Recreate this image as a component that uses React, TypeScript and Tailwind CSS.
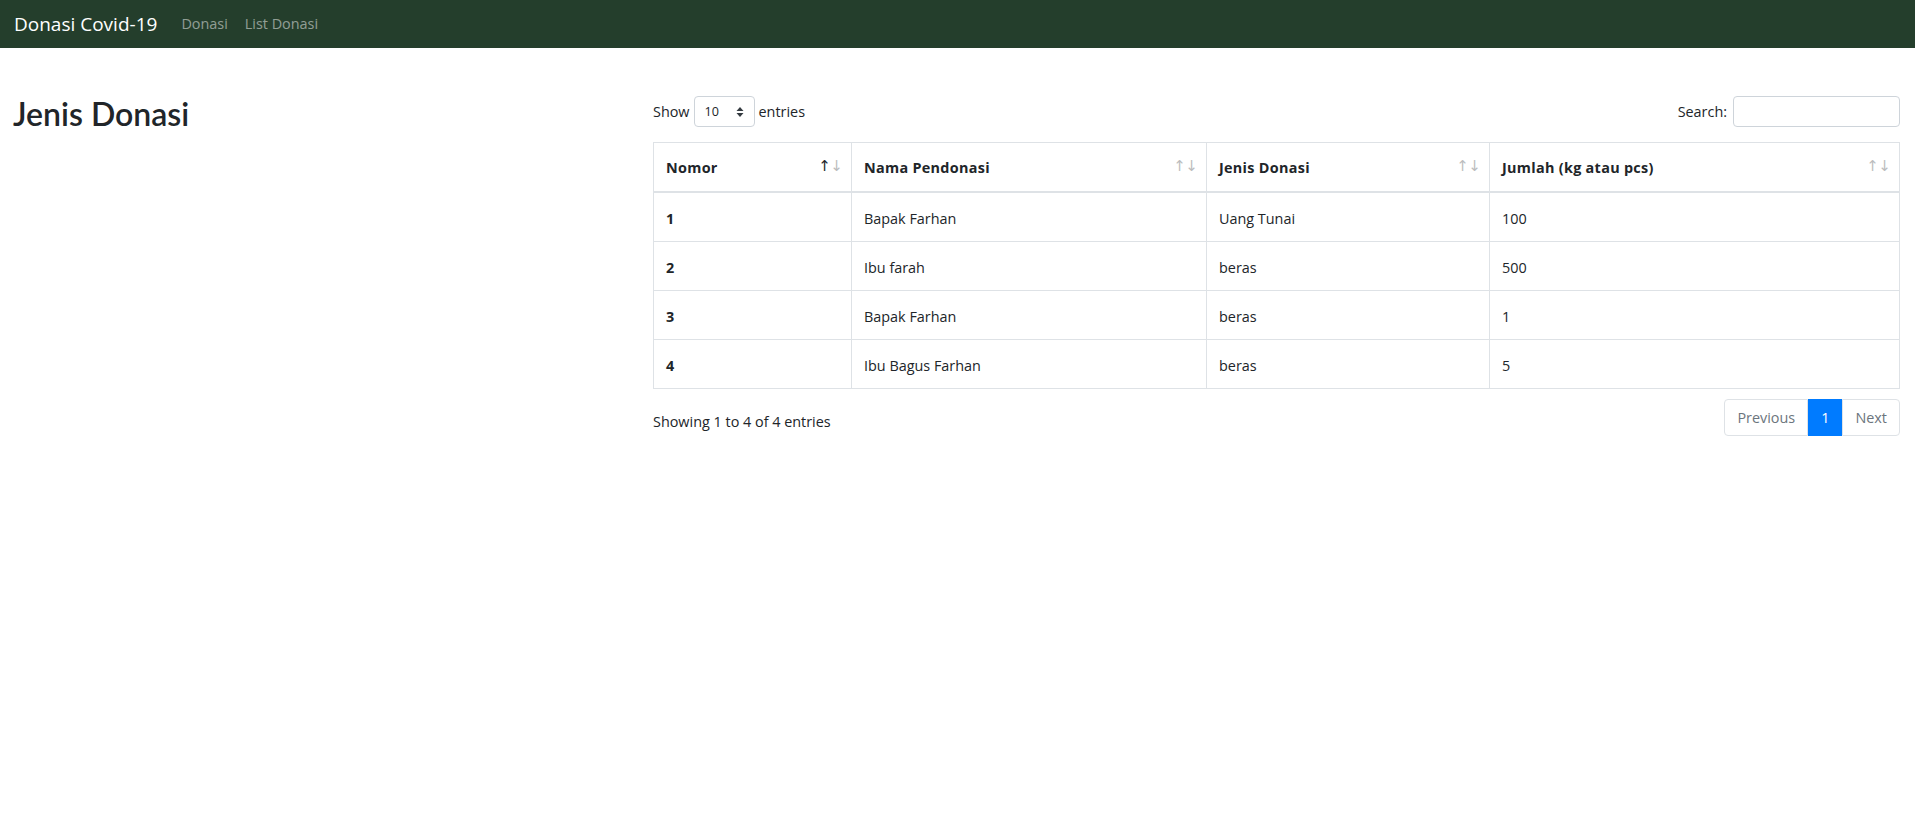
import React from 'react'

const rows = [
  { no: 1, nama: 'Bapak Farhan', jenis: 'Uang Tunai', jumlah: '100' },
  { no: 2, nama: 'Ibu farah', jenis: 'beras', jumlah: '500' },
  { no: 3, nama: 'Bapak Farhan', jenis: 'beras', jumlah: '1' },
  { no: 4, nama: 'Ibu Bagus Farhan', jenis: 'beras', jumlah: '5' },
]

const SortIcon = ({ active }: { active?: boolean }) => (
  <span className="absolute right-[8px] top-[16px] flex text-[15px] leading-none font-normal font-['DejaVu_Sans',sans-serif]">
    <span className={active ? 'text-[#212529]' : 'text-[#212529] opacity-30'}>↑</span>
    <span className="text-[#212529] opacity-30 -ml-[1px]">↓</span>
  </span>
)

const App = () => {
  const cols = ['Nomor', 'Nama Pendonasi', 'Jenis Donasi', 'Jumlah (kg atau pcs)']
  const cell = 'px-[12px] pt-[14px] pb-[10px] border border-[#dee2e6]'
  return (
    <div className="min-h-screen bg-white text-[#212529] text-[14.4px] leading-[24px] font-['Open_Sans','Noto_Sans',sans-serif]">
      <nav className="h-[48px] bg-[#243e2c] flex items-center px-[14px]">
        <span className="text-white text-[19px] mr-[24px]">Donasi Covid-19</span>
        <a className="text-white/50 mr-[17px]">Donasi</a>
        <a className="text-white/50">List Donasi</a>
      </nav>

      <div className="flex px-[15px] pt-[48px]">
        <div className="w-[623px] shrink-0">
          <h2 className="text-[32px] font-semibold leading-[1.2] -mt-[1px] -ml-[2px] font-['Lato',sans-serif]">Jenis Donasi</h2>
        </div>
        <div className="ml-[15px] w-[1249px]">
          <div className="flex items-center justify-between h-[31px]">
            <div className="flex items-center gap-[4px]">
              <span>Show</span>
              <div className="w-[61px] h-[31px] border border-[#ced4da] rounded-[4px] flex items-center justify-between px-[10px] text-[12.6px]">
                <span>10</span>
                <svg width="8" height="12" viewBox="0 0 8 12">
                  <path d="M4 1 L7.5 5 H0.5 Z M4 11 L0.5 7 H7.5 Z" fill="#343a40" />
                </svg>
              </div>
              <span>entries</span>
            </div>
            <div className="flex items-center gap-[6px]">
              <span>Search:</span>
              <div className="w-[167px] h-[31px] border border-[#ced4da] rounded-[4px]" />
            </div>
          </div>

          <table className="w-full mt-[15px] border-collapse border border-[#dee2e6]">
            <thead>
              <tr>
                {cols.map((c, i) => (
                  <th
                    key={c}
                    className={
                      'relative text-left font-bold tracking-[0.3px] px-[12px] pt-[13px] pb-[11px] border border-[#dee2e6] border-b-2 ' +
                      (i === 0 ? 'w-[198px]' : i === 1 ? 'w-[355px]' : i === 2 ? 'w-[283px]' : '')
                    }
                  >
                    {c}
                    <SortIcon active={i === 0} />
                  </th>
                ))}
              </tr>
            </thead>
            <tbody>
              {rows.map((r) => (
                <tr key={r.no}>
                  <td className={cell + ' font-bold'}>{r.no}</td>
                  <td className={cell}>{r.nama}</td>
                  <td className={cell}>{r.jenis}</td>
                  <td className={cell}>{r.jumlah}</td>
                </tr>
              ))}
            </tbody>
          </table>

          <div className="flex items-center justify-between mt-[10px]">
            <span className="mt-[8px]">Showing 1 to 4 of 4 entries</span>
            <div className="flex h-[37px] leading-[1.25]">
              <span className="flex items-center px-[12px] border border-[#dee2e6] rounded-l-[4px] text-[#6c757d]">Previous</span>
              <span className="flex items-center px-[12px] bg-[#007bff] border border-[#007bff] text-white">1</span>
              <span className="flex items-center px-[12px] border border-[#dee2e6] rounded-r-[4px] text-[#6c757d]">Next</span>
            </div>
          </div>
        </div>
      </div>
    </div>
  )
}

export default App
